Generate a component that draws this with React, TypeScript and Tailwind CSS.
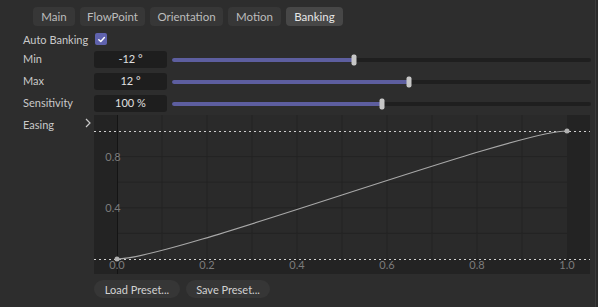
import React from 'react';

const tabs = [
  { name: 'Main', w: 'w-[42px]' },
  { name: 'FlowPoint', w: 'w-[65px]' },
  { name: 'Orientation', w: 'w-[73px]' },
  { name: 'Motion', w: 'w-[53px]' },
  { name: 'Banking', w: 'w-[57px]' },
];

const params = [
  { label: 'Min', text: '-12 °', value: -12, min: -90, max: 90 },
  { label: 'Max', text: '12 °', value: 12, min: -90, max: 90 },
  { label: 'Sensitivity', text: '100 %', value: 100, min: 0, max: 200 },
];

// plot geometry, local to the graph box (496 x 159)
const X0 = 23;
const X1 = 473;
const Y0 = 144;
const Y1 = 16;
const px = (v: number) => X0 + (X1 - X0) * v;
const py = (v: number) => Y0 - (Y0 - Y1) * v;

function Slider({ value, min, max }: { value: number; min: number; max: number }) {
  const pct = ((value - min) / (max - min)) * 100;
  return (
    <div className="relative flex-1 h-[4px] rounded-full bg-[#1f1f1f]">
      <div className="h-full rounded-full bg-[#5d5e9f]" style={{ width: `${pct}%` }} />
      <div
        className="absolute top-1/2 -translate-y-1/2 -translate-x-1/2 w-[5px] h-[11px] rounded-[2px] bg-[#c6c6c6]"
        style={{ left: `${pct}%` }}
      />
    </div>
  );
}

function EasingGraph() {
  const a = 0.12;
  const d = `M ${px(0)} ${py(0)} C ${px(a)} ${py(0)}, ${px(1 - a)} ${py(1)}, ${px(1)} ${py(1)}`;
  const vLines = [1, 2, 3, 4, 5, 6, 7, 8, 9].map((i) => px(i / 10));
  const hLines = [0.2, 0.4, 0.6, 0.8].map((v) => py(v));
  return (
    <svg width="496" height="159" className="block">
      <rect x="0" y="0" width="496" height="159" fill="#232323" />
      <rect x={X0} y="0" width={X1 - X0} height={Y0} fill="#2a2a2a" />
      {vLines.map((x) => (
        <line key={x} x1={x} y1="0" x2={x} y2={Y0} stroke="#232323" strokeWidth="1" />
      ))}
      {hLines.map((y) => (
        <line key={y} x1={X0} y1={y} x2={X1} y2={y} stroke="#232323" strokeWidth="1" />
      ))}
      <line x1={X0 + 0.5} y1="0" x2={X0 + 0.5} y2="159" stroke="#141414" strokeWidth="1" />
      <line x1="0" y1={Y1 + 0.5} x2="496" y2={Y1 + 0.5} stroke="#d0d0d0" strokeWidth="1" strokeDasharray="2 3" />
      <line x1="0" y1={Y0 + 0.5} x2="496" y2={Y0 + 0.5} stroke="#d0d0d0" strokeWidth="1" strokeDasharray="2 3" />
      <g fill="#7c7c7c" fontSize="11" fontFamily="Lato, sans-serif" textAnchor="middle">
        <text x="19" y={py(0.8) + 4}>0.8</text>
        <text x="19" y={py(0.4) + 4}>0.4</text>
        {[0, 0.2, 0.4, 0.6, 0.8, 1].map((v) => (
          <text key={v} x={px(v)} y="154">{v.toFixed(1)}</text>
        ))}
      </g>
      <path d={d} fill="none" stroke="#a8a8a8" strokeWidth="1.2" />
      <circle cx={px(0)} cy={py(0)} r="2.5" fill="#b0b0b0" />
      <circle cx={px(1)} cy={py(1)} r="2.5" fill="#b0b0b0" />
    </svg>
  );
}

export default function App() {
  return (
    <div
      className="w-[598px] h-[307px] overflow-hidden bg-[#2d2d2d] text-[11px] text-[#c9c9c9] flex"
      style={{ fontFamily: "Lato, 'Noto Sans', sans-serif" }}
    >
      <div className="flex-1 pt-[7px] pl-[23px] pr-[4px]">
        <div className="flex gap-[5px] pl-[10px]">
          {tabs.map((t) => (
            <div
              key={t.name}
              className={
                t.w +
                ' h-[19px] rounded-[4px] flex items-center justify-center leading-none text-[11.5px] ' +
                (t.name === 'Banking' ? 'bg-[#474747] text-[#e6e6e6]' : 'bg-[#373737] text-[#bdbdbd]')
              }
            >
              {t.name}
            </div>
          ))}
        </div>

        <div className="mt-[7px] h-[12px] flex items-center">
          <span className="w-[72px] leading-none">Auto Banking</span>
          <div className="w-[12px] h-[12px] rounded-[2px] bg-[#5f62ad] flex items-center justify-center">
            <svg width="9" height="9" viewBox="0 0 10 10">
              <path d="M2 5.2 L4.2 7.3 L8.2 2.8" fill="none" stroke="#ffffff" strokeWidth="1.6" strokeLinecap="round" strokeLinejoin="round" />
            </svg>
          </div>
        </div>

        <div className="mt-[6px] flex flex-col gap-[5px]">
          {params.map((p) => (
            <div key={p.label} className="h-[17px] flex items-center">
              <span className="w-[71px]">{p.label}</span>
              <div className="w-[73px] h-full rounded-[3px] bg-[#1e1e1e] flex items-center justify-center text-[#e0e0e0]">
                {p.text}
              </div>
              <div className="w-[5px]" />
              <Slider value={p.value} min={p.min} max={p.max} />
            </div>
          ))}
        </div>

        <div className="mt-[3px] flex">
          <div className="w-[71px] flex justify-between items-start pt-[2px]">
            <span>Easing</span>
            <svg width="6" height="10" viewBox="0 0 6 10" className="mt-[1px] mr-[3px]">
              <path d="M1 1 L5 5 L1 9" fill="none" stroke="#c9c9c9" strokeWidth="1.2" />
            </svg>
          </div>
          <EasingGraph />
        </div>

        <div className="mt-[6px] ml-[71px] flex gap-[6px]">
          <button className="h-[18px] w-[86px] rounded-full bg-[#363636] text-[#d2d2d2] leading-none">Load Preset...</button>
          <button className="h-[18px] w-[84px] rounded-full bg-[#363636] text-[#d2d2d2] leading-none">Save Preset...</button>
        </div>
      </div>
      <div className="w-[1px] bg-[#3b3b3b]" />
      <div className="w-[2px] bg-[#2a2a2a]" />
    </div>
  );
}
